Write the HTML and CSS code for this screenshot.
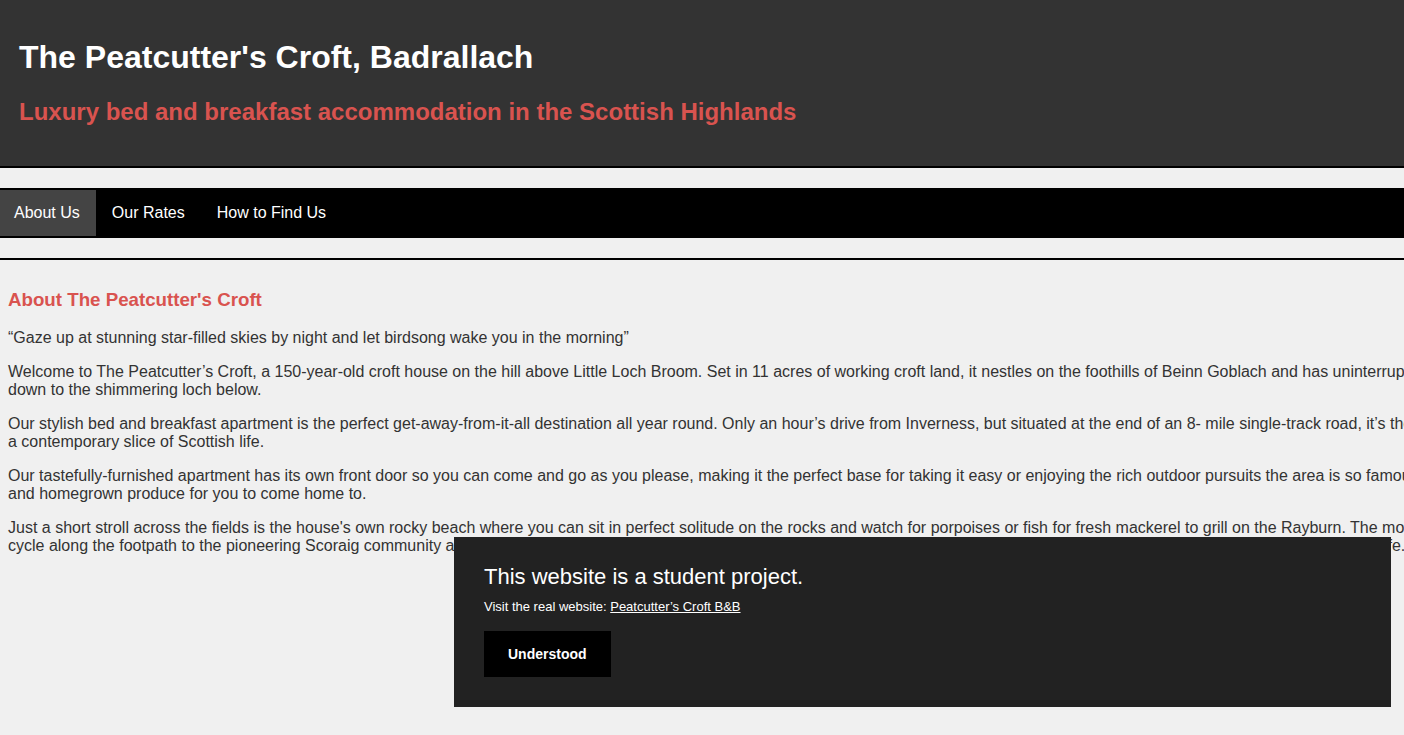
FILE: index.html
```html
<!DOCTYPE html>
<html lang="en">
<head>
    <meta charset="UTF-8">
    <meta name="viewport" content="width=device-width, initial-scale=1.0">
    <title>The Peatcutter's Croft, Badrallach</title>
    <link rel="stylesheet" href="styles.css">
</head>
<body>
    <div class="page">
        <header class="site-header">
            <h1>The Peatcutter's Croft, Badrallach</h1>
            <h2>Luxury bed and breakfast accommodation in the Scottish Highlands</h2>
        </header>

        <nav class="main-nav">
            <ul>
                <li><a href="#" class="active">About Us</a></li>
                <li><a href="#">Our Rates</a></li>
                <li><a href="#">How to Find Us</a></li>
            </ul>
        </nav>

        <hr class="divider">

        <main class="content">
            <h3>About The Peatcutter's Croft</h3>
            <p>“Gaze up at stunning star-filled skies by night and let birdsong wake you in the morning”</p>
            <p>Welcome to The Peatcutter’s Croft, a 150-year-old croft house on the hill above Little Loch Broom. Set in 11 acres of working croft land, it nestles on the foothills of Beinn Goblach and has uninterrupted views<br>down to the shimmering loch below.</p>
            <p>Our stylish bed and breakfast apartment is the perfect get-away-from-it-all destination all year round. Only an hour’s drive from Inverness, but situated at the end of an 8- mile single-track road, it’s the ideal place to experience<br>a contemporary slice of Scottish life.</p>
            <p>Our tastefully-furnished apartment has its own front door so you can come and go as you please, making it the perfect base for taking it easy or enjoying the rich outdoor pursuits the area is so famous for. There’s always home baking<br>and homegrown produce for you to come home to.</p>
            <p>Just a short stroll across the fields is the house's own rocky beach where you can sit in perfect solitude on the rocks and watch for porpoises or fish for fresh mackerel to grill on the Rayburn. The more adventurous can walk or<br>cycle along the footpath to the pioneering Scoraig community and the lighthouse at Cailleach Head, or simply relax in the walled garden with a good novel, and soak up the peaceful pace of croft life.</p>
        </main>
    </div>

    <div class="notice">
        <p class="notice-title">This website is a student project.</p>
        <p class="notice-text">Visit the real website: <a href="#">Peatcutter’s Croft B&amp;B</a></p>
        <button class="notice-button">Understood</button>
    </div>
</body>
</html>
```

FILE: styles.css
```css
body {
    font-family: "Liberation Sans", Arial, sans-serif;
    background-color: #f0f0f0;
    color: #333;
    margin: 0;
    padding: 0;
    overflow-x: hidden;
}

.page {
    width: 1700px;
}

.site-header {
    background-color: #333;
    border-bottom: 2px solid #000;
    padding: 18px 19px 20px;
}

.site-header h1 {
    color: #fff;
    font-size: 32px;
}

.site-header h2 {
    color: #d9534f;
    font-size: 24px;
}

.main-nav {
    margin-top: 20px;
    background-color: #000;
}

.main-nav ul {
    display: flex;
    list-style: none;
    margin: 0 0 0 -2px;
    padding: 2px 0;
}

.main-nav a {
    display: block;
    padding: 0 16px;
    line-height: 46px;
    font-size: 16px;
    color: #fff;
    text-decoration: none;
}

.main-nav a.active {
    background-color: #444;
}

.divider {
    margin: 20px 0 0;
    border: 0;
    border-top: 2px solid #000;
}

.content {
    padding: 10px 8px;
}

.content h3 {
    color: #d9534f;
    font-size: 18.72px;
}

.content p {
    font-size: 16px;
}

/* student project notice */
.notice {
    position: fixed;
    right: 13px;
    bottom: 28px;
    width: 937px;
    height: 170px;
    box-sizing: border-box;
    padding: 27px 30px 30px;
    background-color: #222;
    color: #fff;
}

.notice-title {
    margin: 0 0 10px;
    font-size: 22px;
    line-height: 25px;
}

.notice-text {
    margin: 0 0 17px;
    font-size: 13px;
    line-height: 15px;
}

.notice-text a {
    color: #fff;
}

.notice-button {
    background-color: #000;
    color: #fff;
    border: 0;
    padding: 15px 24px;
    font-family: inherit;
    font-size: 14px;
    font-weight: bold;
    line-height: 16px;
    cursor: pointer;
}
```
